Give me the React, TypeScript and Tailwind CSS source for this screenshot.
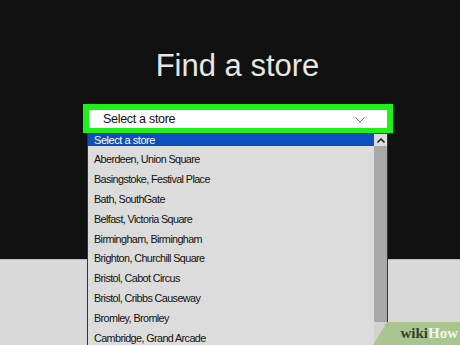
import React from "react";

const stores = [
  "Aberdeen, Union Square",
  "Basingstoke, Festival Place",
  "Bath, SouthGate",
  "Belfast, Victoria Square",
  "Birmingham, Birmingham",
  "Brighton, Churchill Square",
  "Bristol, Cabot Circus",
  "Bristol, Cribbs Causeway",
  "Bromley, Bromley",
  "Cambridge, Grand Arcade",
];

export default function App() {
  return (
    <div
      className="relative w-[460px] h-[345px] overflow-hidden bg-[#d9d9d9]"
      style={{ fontFamily: '"Liberation Sans", Arial, sans-serif' }}
    >
      <div className="h-[260px] bg-[#111111] border-b border-[#bdbdbd] flex flex-col items-center">
        <h1 className="mt-[44px] text-[31px] leading-[44px] text-[#e6e6e6] ml-[15px]">Find a store</h1>
      </div>

      {/* select box with green highlight */}
      <div className="absolute left-[83px] top-[104px] w-[310px] h-[29px] bg-[#1ef01a] p-[6px] pb-[5px]">
        <div className="h-full bg-white flex items-center pl-[14px] pr-[22px]">
          <span className="text-[12.5px] text-[#111] tracking-[-0.3px] flex-1">Select a store</span>
          <svg width="10" height="6" viewBox="0 0 10 6" className="mt-[1px]">
            <path d="M0.5 0.5 L5 5 L9.5 0.5" fill="none" stroke="#777" strokeWidth="1" />
          </svg>
        </div>
      </div>

      {/* dropdown list */}
      <div className="absolute left-[87px] top-[133px] w-[301px] h-[230px] border border-[#333] bg-[#dcdcdc] flex">
        <div className="flex-1 flex flex-col">
          <div className="h-[12px] bg-[#0b4fbf] text-white text-[11px] leading-[12px] pl-[6px] tracking-[-0.45px]">
            Select a store
          </div>
          <div className="flex flex-col pt-[4px]">
            {stores.map((s) => (
              <div
                key={s}
                className="h-[19.9px] leading-[19.9px] text-[10.8px] text-[#111] pl-[6px] tracking-[-0.6px]"
              >
                {s}
              </div>
            ))}
          </div>
        </div>
        <div className="w-[13px] flex flex-col bg-[#d2d2d2]">
          <div className="h-[12px] bg-[#dcdcdc] flex items-center justify-center">
            <svg width="8" height="5" viewBox="0 0 8 5">
              <path d="M0.5 4.5 L4 1 L7.5 4.5" fill="none" stroke="#111" strokeWidth="1.4" />
            </svg>
          </div>
          <div className="h-[176px] bg-[#a8a8a8]" />
        </div>
      </div>

      {/* wikiHow watermark */}
      <div
        className="absolute right-0 bottom-0 w-[87px] h-[23px] bg-[#a9c690]"
        style={{ clipPath: "polygon(14px 0, 100% 0, 100% 100%, 0 100%)" }}
      />
      <div
        className="absolute right-[2px] bottom-[4px] text-[15px] font-bold leading-none"
        style={{ fontFamily: '"Liberation Serif", "Times New Roman", serif' }}
      >
        <span className="text-[#3a3f36]">wiki</span>
        <span className="text-[#f2f5ee]">How</span>
      </div>
    </div>
  );
}
